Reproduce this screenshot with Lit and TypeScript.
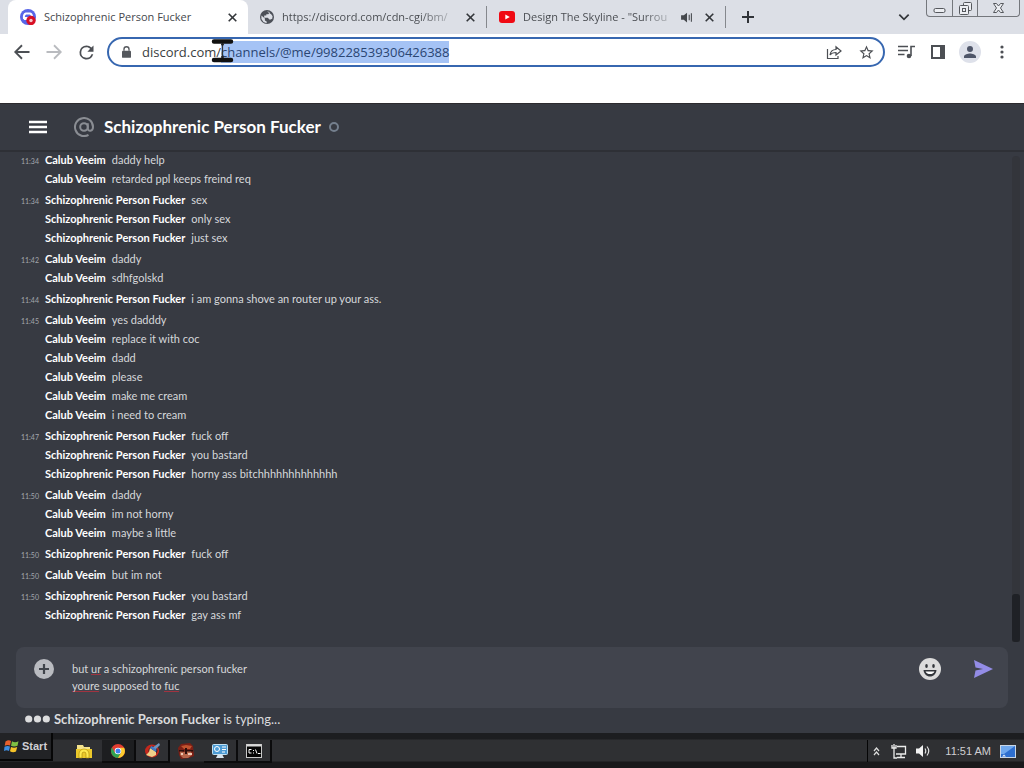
import { LitElement, html, css, svg } from "lit";
import { customElement } from "lit/decorators.js";

interface Group { time: string; author: string; lines: string[]; }

const ME = "Calub Veeim";
const PEER = "Schizophrenic Person Fucker";

const GROUPS: Group[] = [
  { time: "11:34", author: ME, lines: ["daddy help", "retarded ppl keeps freind req"] },
  { time: "11:34", author: PEER, lines: ["sex", "only sex", "just sex"] },
  { time: "11:42", author: ME, lines: ["daddy", "sdhfgolskd"] },
  { time: "11:44", author: PEER, lines: ["i am gonna shove an router up your ass."] },
  { time: "11:45", author: ME, lines: ["yes dadddy", "replace it with coc", "dadd", "please", "make me cream", "i need to cream"] },
  { time: "11:47", author: PEER, lines: ["fuck off", "you bastard", "horny ass bitchhhhhhhhhhhhh"] },
  { time: "11:50", author: ME, lines: ["daddy", "im not horny", "maybe a little"] },
  { time: "11:50", author: PEER, lines: ["fuck off"] },
  { time: "11:50", author: ME, lines: ["but im not"] },
  { time: "11:50", author: PEER, lines: ["you bastard", "gay ass mf"] },
];

const stroke = (size: number, d: string, w = 2) => html`<svg width=${size} height=${size} viewBox="0 0 24 24" fill="none" stroke="currentColor" stroke-width=${w}>${svg`<path d=${d}></path>`}</svg>`;
const solid = (size: number, d: string) => html`<svg width=${size} height=${size} viewBox="0 0 24 24" fill="currentColor">${svg`<path fill-rule="evenodd" d=${d}></path>`}</svg>`;

const X = "M5 5L19 19M19 5L5 19";

@customElement("browser-chrome")
class BrowserChrome extends LitElement {
  static styles = css`
    :host { display: block; background: #fff; color: #45484d; font: 11px/16px "Open Sans", "Noto Sans", sans-serif; position: relative; }
    button { all: unset; display: flex; align-items: center; justify-content: center; box-sizing: border-box; }
    svg { display: block; flex: none; }
    .strip { display: flex; height: 34px; background: #dcdfe6; padding-left: 8px; align-items: stretch; }
    .tab { display: flex; align-items: center; width: 239px; box-sizing: border-box; padding: 0 8px 0 12px; gap: 8px; }
    .tab.active { width: 240px; background: #fff; border-radius: 8px 8px 0 0; }
    .tab.line { border-right: 1px solid transparent; border-image: linear-gradient(transparent 7px, #85888d 7px, #85888d 27px, transparent 27px) 1; }
    .label { flex: 1; min-width: 0; white-space: nowrap; }
    .fade { color: transparent; background: linear-gradient(90deg, #45484d 80%, #b5b8be 98%) text; }
    .close { width: 16px; height: 16px; color: #33363a; }
    .new { width: 44px; color: #303338; }
    .spacer { flex: 1; }
    .search { width: 32px; margin-right: 6px; color: #33363a; }
    .caption { display: flex; height: 17px; margin-right: 4px; border: 1px solid #74777c; border-top: 0; border-radius: 0 0 4px 4px; box-sizing: border-box; color: #55585d; }
    .caption button { width: 25px; }
    .caption button + button { border-left: 1px solid #74777c; }
    .caption button:last-child { width: 42px; }
    .bar { display: flex; align-items: center; height: 36px; padding: 0 6px; }
    .tool { width: 32px; height: 32px; color: #4c4f54; }
    .off { color: #b9bbbf; }
    .omni { flex: 1; display: flex; align-items: center; box-sizing: border-box; height: 30px; margin: 0 5px; border: 2px solid #3767b0; border-radius: 15px; padding: 0 1px 0 13px; color: #55585d; }
    .url { flex: 1; min-width: 0; border: 0; outline: 0; background: none; padding: 0; margin-left: 11px; color: #3a3d41; caret-color: transparent; font: 13px/22px "Open Sans", "Noto Sans", sans-serif; }
    .url::selection { background: #a5c3f5; color: #2b4673; }
    .person { width: 22px; height: 22px; border-radius: 50%; background: #dee1ea; display: grid; place-items: center; }
    .marks { height: 33px; }
    .beam { position: absolute; left: 211px; top: 38px; pointer-events: none; }
  `;

  firstUpdated() {
    const url = this.renderRoot.querySelector<HTMLInputElement>(".url")!;
    url.focus();
    url.setSelectionRange(12, url.value.length);
    url.scrollLeft = 0;
  }

  render() {
    return html`
      <div class="strip">
        <div class="tab active">
          <svg width="16" height="16" viewBox="0 0 16 16"><circle cx="8" cy="8" r="8" fill="#5865e8"/><path d="M4 10C3.500 7 4.500 5 6 4.500L10 4.500C11.500 5 12 6 12 8" fill="none" stroke="#fff" stroke-width="2"/><path d="M4 8h6v3H4z" fill="#fff"/><circle cx="11" cy="11.500" r="4.700" fill="#d80f24"/><circle cx="11" cy="11.500" r="1.700" fill="#f3c7cc"/></svg>
          <span class="label">${PEER}</span>
          <button class="close" aria-label="Close tab">${stroke(13, X, 3)}</button>
        </div>
        <div class="tab line">
          <svg width="14" height="14" viewBox="2 2 20 20"><circle cx="12" cy="12" r="10" fill="#4c5058"/><path d="M4 10L9 14V17L11.500 18.500V21L7 19L4 15ZM12 4L16 5 14 8H11V10H8V13H13L16 16L19.500 14.500L20 11 18 8Z" fill="#dcdfe6"/></svg>
          <span class="label fade">https://discord.com/cdn-cgi/bm/</span>
          <button class="close" aria-label="Close tab">${stroke(13, X, 3)}</button>
        </div>
        <div class="tab line">
          <svg width="16" height="12" viewBox="0 0 16 12"><rect width="16" height="12" rx="3" fill="#f00a14"/><path d="M6.300 3.400v5.200L10.800 6z" fill="#fff"/></svg>
          <span class="label fade">Design The Skyline - "Surrou</span>
          ${solid(13, "M2 8v8h5l6 5V3L7 8zM16 7v10h2V7zM20 4v16h2V4z")}
          <button class="close" aria-label="Close tab">${stroke(13, X, 3)}</button>
        </div>
        <button class="new" aria-label="New tab">${stroke(16, "M12 3V21M3 12H21", 3)}</button>
        <span class="spacer"></span>
        <button class="search" aria-label="Search tabs">${stroke(14, "M4 8L12 16L20 8", 3)}</button>
        <div class="caption">
          <button aria-label="Minimize"><svg width="13" height="16" viewBox="0 0 13 16"><rect x="1" y="8.500" width="11" height="4" rx="1.500" fill="#eceef2" stroke="currentColor"/></svg></button>
          <button aria-label="Restore"><svg width="13" height="16" viewBox="0 0 13 16" fill="#eceef2" stroke="currentColor"><rect x="4.500" y="2.500" width="8" height="8" rx="1"/><rect x=".5" y="5.500" width="9" height="9" rx="1"/><rect x="3.500" y="8.500" width="3" height="3"/></svg></button>
          <button aria-label="Close"><svg width="13" height="16" viewBox="0 0 13 16"><path d="M1.500 3.500h3l2 2.500 2-2.500h3L8.500 8l3 4.500h-3l-2-2.500-2 2.500h-3L4.500 8z" fill="#eceef2" stroke="currentColor"/></svg></button>
        </div>
      </div>
      <div class="bar">
        <button class="tool" aria-label="Back">${stroke(18, "M22 12H4M12 3L3 12L12 21", 2.4)}</button>
        <button class="tool off" aria-label="Forward">${stroke(18, "M2 12H20M12 3L21 12L12 21", 2.4)}</button>
        <button class="tool" aria-label="Reload">${solid(21, "M17.650 6.350A7.950 7.950 0 0 0 12 4a8 8 0 1 0 7.730 10h-2.080A6 6 0 1 1 12 6c1.660 0 3.140.69 4.220 1.780L13 11h7V4z")}</button>
        <div class="omni">
          <svg width="9" height="12" viewBox="0 0 10 13"><rect x="0" y="5" width="10" height="8" rx="1" fill="currentColor"/><path d="M2.200 5V3.500a2.800 2.800 0 0 1 5.600 0V5" fill="none" stroke="currentColor" stroke-width="1.500"/></svg>
          <input class="url" aria-label="Address" spellcheck="false" .value=${"discord.com/channels/@me/998228539306426388"} />
          <button class="tool" aria-label="Share"><svg width="16" height="15" viewBox="0 0 16 15" fill="none" stroke="currentColor" stroke-width="1.200"><path d="M1.500 4V13.500H12V11"/><path d="M4 10C4.500 6.500 7 4.500 10 4.500V1.800L15 6L10 10V7.500C7.500 7.500 5.500 8 4 10Z"/></svg></button>
          <button class="tool" aria-label="Bookmark">${solid(17, "M22 9.240l-7.190-.62L12 2 9.190 8.630 2 9.240l5.460 4.730L5.820 21 12 17.270 18.180 21l-1.630-7.030L22 9.240zM12 15.400l-3.760 2.270 1-4.280-3.320-2.880 4.380-.38L12 6.100l1.710 4.040 4.380.38-3.320 2.880 1 4.280L12 15.400z")}</button>
        </div>
        <button class="tool" aria-label="Media"><svg width="17" height="14" viewBox="0 0 17 14" fill="none" stroke="currentColor" stroke-width="1.600"><path d="M0 1.500H10M0 5.500H10M0 9.500H6.500M13 11V1.500H17"/><circle cx="11" cy="11" r="2.300" fill="currentColor" stroke="none"/></svg></button>
        <button class="tool" aria-label="Side panel"><svg width="14" height="14" viewBox="0 0 14 14"><rect x="1" y="1" width="12" height="12" fill="none" stroke="currentColor" stroke-width="2"/><rect x="9" y="0" width="5" height="14" fill="currentColor"/></svg></button>
        <button class="tool" aria-label="Profile"><span class="person"><svg width="12" height="12" viewBox="4 4 16 16"><path fill="#4f5669" d="M12 12a4 4 0 1 0 0-8 4 4 0 0 0 0 8zm0 2c-2.670 0-8 1.340-8 4v2h16v-2c0-2.660-5.330-4-8-4z"/></svg></span></button>
        <button class="tool" aria-label="Menu"><svg width="4" height="14" viewBox="0 0 4 14" fill="currentColor"><circle cx="2" cy="2" r="1.600"/><circle cx="2" cy="7" r="1.600"/><circle cx="2" cy="12" r="1.600"/></svg></button>
      </div>
      <div class="marks"></div>
      <svg class="beam" width="24" height="26" viewBox="0 0 24 26" stroke-linecap="round"><path d="M11.500 3V22" stroke="#333" stroke-width="1.200"/><path d="M3 3.500H20M3 22H20" stroke="#111" stroke-width="4.500"/><path d="M11 6.500H12M11 19H12" stroke="#222" stroke-width="2"/></svg>
    `;
  }
}

@customElement("chat-view")
class ChatView extends LitElement {
  static styles = css`
    :host { display: flex; flex-direction: column; min-height: 0; background: #373a42; color: #d6d8db; font: 11px/18px Lato, "Noto Sans", sans-serif; }
    button { all: unset; display: block; }
    svg { display: block; }
    .head { display: flex; align-items: center; height: 49px; box-sizing: border-box; padding-left: 28px; border-top: 1px solid #2c2a2e; border-bottom: 2px solid #2e3036; color: #fff; }
    .at { margin-left: 26px; color: #8a8d93; }
    h1 { margin: 0 8px 0 10px; font: 700 17px/22px Lato, "Noto Sans", sans-serif; color: #fff; }
    .status { width: 10px; height: 10px; box-sizing: border-box; border: 2px solid #747f8d; border-radius: 50%; }
    .body { flex: 1; min-height: 0; display: flex; }
    .log { flex: 1; min-width: 0; display: flex; flex-direction: column; justify-content: flex-end; overflow: hidden; padding-bottom: 17px; }
    .group { padding-top: 2px; }
    .row { display: grid; grid-template-columns: 39px 1fr; column-gap: 6px; height: 19px; }
    time { text-align: right; font-size: 7px; line-height: 20px; color: #a4a7ad; }
    .name { color: #fff; font-weight: 700; margin-right: 6px; }
    .line { white-space: nowrap; }
    .track { width: 8px; margin: 4px 4px 0 0; background: #33353b; display: flex; align-items: flex-end; border-radius: 4px 4px 0 0; }
    .thumb { width: 8px; height: 48px; background: #1f2126; border-radius: 3px; }
    .composer { display: flex; align-items: flex-start; margin: 5px 16px 0; height: 61px; border-radius: 8px; background: #41444d; padding: 0 15px 0 18px; box-sizing: border-box; color: #dadbdd; }
    .plus { margin-top: 12px; }
    .draft { flex: 1; height: 40px; margin: 13px 0 0 18px; padding: 0; border: 0; outline: 0; resize: none; overflow: hidden; color: #d6d8da; font: 11px/17px Lato, "Noto Sans", sans-serif;
      background: linear-gradient(#a03340, #a03340) 19px 14px / 10px 1px no-repeat, linear-gradient(#a03340, #a03340) 0 31px / 27px 1px no-repeat, linear-gradient(#a03340, #a03340) 92px 31px / 15px 1px no-repeat; }
    .emoji { margin: 11px 32px 0 0; }
    .send { margin-top: 12px; color: #938ce6; }
    .typing { display: flex; align-items: center; height: 25px; box-sizing: border-box; padding: 0 0 3px 25px; gap: 4px; white-space: pre; color: #dadbdd; font-size: 13px; }
  `;

  render() {
    return html`
      <header class="head">
        <button aria-label="Open menu"><svg width="20" height="14" viewBox="0 0 20 14"><path d="M1 2H19M1 7H19M1 12H19" stroke="#fff" stroke-width="2.600"/></svg></button>
        <svg class="at" width="20" height="20" viewBox="0 0 20 20" fill="none" stroke="currentColor" stroke-width="2"><circle cx="10" cy="10" r="3.800"/><path d="M13.800 6.200V11.200C13.800 15 19 14.500 19 10A9 9 0 1 0 14.500 17.800"/></svg>
        <h1>${PEER}</h1>
        <span class="status" role="img" aria-label="Offline"></span>
      </header>
      <div class="body">
        <main class="log">
          ${GROUPS.map(g => html`<section class="group">${g.lines.map((t, i) => html`
            <div class="row">${i === 0 ? html`<time>${g.time}</time>` : html`<span></span>`}<span class="line"><span class="name">${g.author}</span><span>${t}</span></span></div>`)}</section>`)}
        </main>
        <div class="track"><div class="thumb"></div></div>
      </div>
      <div class="composer">
        <button class="plus" aria-label="Add attachment"><svg width="20" height="20" viewBox="0 0 20 20"><circle cx="10" cy="10" r="10" fill="#b9bbc0"/><path d="M10 5V15M5 10H15" stroke="#40444b" stroke-width="2.200"/></svg></button>
        <textarea class="draft" aria-label="Message" spellcheck="false" .value=${"but ur a schizophrenic person fucker\nyoure supposed to fuc"}></textarea>
        <button class="emoji" aria-label="Emoji"><svg width="22" height="22" viewBox="0 0 22 22"><circle cx="11" cy="11" r="11" fill="#dcdcdc"/><ellipse cx="7.500" cy="8" rx="1.300" ry="2.100" fill="#33363b"/><ellipse cx="14.500" cy="8" rx="1.300" ry="2.100" fill="#33363b"/><path d="M4.500 12H17.500C17 16 14.500 18.500 11 18.500S5 16 4.500 12Z" fill="#33363b"/><path d="M6.500 13.500H15.500C14.500 15.500 13 16 11 16S7.500 15.500 6.500 13.500Z" fill="#fff"/></svg></button>
        <button class="send" aria-label="Send message"><svg width="20" height="20" viewBox="0 0 20 20"><path d="M1 1L20 10L1 19L2.500 11.500L10 10L2.500 8.500Z" fill="currentColor"/></svg></button>
      </div>
      <div class="typing"><svg width="25" height="8" viewBox="0 0 25 8" fill="#dcddde"><circle cx="3.700" cy="4" r="3.600"/><circle cx="12.500" cy="4" r="3.600"/><circle cx="21.300" cy="4" r="3.600"/></svg><span><b>${PEER}</b> is typing...</span></div>
    `;
  }
}

@customElement("task-bar")
class TaskBar extends LitElement {
  static styles = css`
    :host { display: flex; align-items: flex-start; box-sizing: border-box; height: 35px; background: linear-gradient(#1c1d20 0 6px, #2f3033 7px 28px, #19191b 29px); color: #cfcfd2; font: 11px/16px "Liberation Sans", Arial, sans-serif; }
    button { all: unset; box-sizing: border-box; display: flex; align-items: center; }
    svg { display: block; flex: none; }
    .start { width: 53px; height: 28px; padding-left: 4px; gap: 3px; font-weight: 700; background: #222326; border-right: 2px solid #060607; border-bottom: 2px solid #060607; margin-right: 15px; }
    .app { width: 34px; height: 23px; margin-top: 7px; justify-content: center; border-right: 2px solid #0b0b0c; border-bottom: 2px solid #0b0b0c; }
    .app.flat { border-color: transparent; }
    .app.on { background: #1d1e20; }
    .tray { display: flex; align-items: center; gap: 9px; height: 22px; margin: 7px 8px 0 auto; padding-left: 5px; border-left: 1px solid #050506; }
    .tray :nth-child(2) { margin-left: 2px; }
    .clock { white-space: nowrap; margin-left: 5px; }
  `;

  render() {
    return html`
      <button class="start"><svg width="15" height="14" viewBox="0 0 15 14"><path d="M1.500 2.500Q4.500 .5 7 2L6 6.500Q4 5.500 .7 6.700Z" fill="#e8602c"/><path d="M8 2.300Q11 4 14.500 2.300L13.500 6.800Q10 8 7 6.800Z" fill="#7fc043"/><path d="M.5 7.700Q3.500 6.300 6 7.500L5 12Q2.500 10.500 0 12Z" fill="#3f8ee0"/><path d="M7 8Q10 9.300 13.200 8L12 12.500Q9 14 6 12.300Z" fill="#f5c228"/></svg>Start</button>
      <button class="app flat" aria-label="Explorer"><svg width="16" height="16" viewBox="0 0 16 16"><path d="M1 2h6l1 2h6v11H1z" fill="#f4e28c"/><path d="M0 6h16v9H0z" fill="#ecc92b"/><path d="M3 15V11a5 5 0 0 1 10 0v4H10V11a2 2 0 0 0-4 0v4z" fill="#ffe94e" stroke="#a88709" stroke-width=".6"/></svg></button>
      <button class="app on" aria-label="Chrome"><svg width="14" height="14" viewBox="0 0 14 14"><circle cx="7" cy="7" r="7" fill="#e03c30"/><path d="M.94 3.500A7 7 0 0 0 7 14L10 8.700 7 7 4 8.700Z" fill="#2fa350"/><path d="M13.100 3.700A7 7 0 0 1 7 14L10.200 8.500 9 3.700Z" fill="#fccc2e"/><circle cx="7" cy="7" r="3.300" fill="#fff"/><circle cx="7" cy="7" r="2.500" fill="#3d7ff0"/></svg></button>
      <button class="app" aria-label="CCleaner"><svg width="16" height="16" viewBox="0 0 16 16"><ellipse cx="8" cy="8" rx="7" ry="6.500" fill="#c5281d"/><ellipse cx="9" cy="7.500" rx="4.500" ry="4" fill="#3a2326"/><path d="M15 0L8 5 10 8 16 2Z" fill="#6f95be"/><path d="M6 5L12 9 12 12 8 14 2 12 5 9Z" fill="#efd08a"/><path d="M6 5l6 4 .5-2.500-5-3.500z" fill="#4279c8"/></svg></button>
      <button class="app flat" aria-label="Game"><svg width="16" height="16" viewBox="0 0 16 16"><path d="M3 1L12 0 15 3 16 13 11 15 3 16 1 12 0 5z" fill="#7c1f15"/><path d="M3 3l5-1 6 1-2 3-6 0z" fill="#c0532f"/><path d="M2 8l4 1 3-1 4 0 1 4-4 3-5 0-3-3z" fill="#b5654a"/><path d="M1 7h5v1.500H1zM9 7h6v1.500H9zM7 5h2v6H7z" fill="#2c0e0b"/><path d="M10 10h4v2h-4zM3 10h2v2H3z" fill="#efc9b5"/></svg></button>
      <button class="app" aria-label="Control panel"><svg width="16" height="16" viewBox="0 0 16 16"><rect x=".5" y="1.500" width="15" height="10" rx="1" fill="#4c9bd4" stroke="#bfe0f3"/><circle cx="5" cy="6" r="2.500" fill="none" stroke="#fff"/><path d="M10 4h4M10 6.500h4M10 9h3" stroke="#fff"/><path d="M6 11h4l2 4H4z" fill="#d6e4ee"/></svg></button>
      <button class="app" aria-label="Command prompt"><svg width="16" height="14" viewBox="0 0 16 14"><rect x=".5" y=".5" width="15" height="13" fill="#050505" stroke="#c9c9c9"/><path d="M1 1.500h14" stroke="#d9d9d9" stroke-width="2"/><path d="M5.500 5.500H3v3.500h2.500M7.500 6v1M7.500 8.500v1M9.500 5.500l1.500 4M12 9.500h2.500" fill="none" stroke="#fff"/></svg></button>
      <div class="tray">
        <svg width="7" height="9" viewBox="0 0 7 9" fill="none" stroke="#dedede" stroke-width="1.200"><path d="M1 4L3.500 1 6 4M1 8L3.500 5 6 8"/></svg>
        <svg width="16" height="15" viewBox="0 0 16 15" fill="none" stroke="#ececec" stroke-width="1.300"><path d="M6 2.500H14.500V10H5M10 10V13.500M6 13.500H14M3 5V14H6M1 1V4H5V1M3 0V5"/></svg>
        <svg width="15" height="14" viewBox="0 0 15 14"><path d="M0 4.500H3L7 1V13L3 9.500H0Z" fill="#f2f2f2"/><path d="M9 4.500Q10.500 7 9 9.500M11 2.500Q14.500 7 11 11.500" fill="none" stroke="#e0e0e0" stroke-width="1.200"/></svg>
        <time class="clock">11:51 AM</time>
        <svg width="16" height="13" viewBox="0 0 16 13"><rect x=".5" y=".5" width="15" height="12" fill="#2e6fd0" stroke="#c9d6e6"/><path d="M1 1H15L4 9H1Z" fill="#6fa8ee"/><path d="M2 11.500l2-2 2 2z" fill="#e6eef8"/></svg>
      </div>
    `;
  }
}

@customElement("app-root")
class AppRoot extends LitElement {
  static styles = css`
    :host { display: flex; flex-direction: column; height: 100vh; overflow: hidden; }
    chat-view { flex: 1; }
  `;
  render() {
    return html`<browser-chrome></browser-chrome><chat-view></chat-view><task-bar></task-bar>`;
  }
}
